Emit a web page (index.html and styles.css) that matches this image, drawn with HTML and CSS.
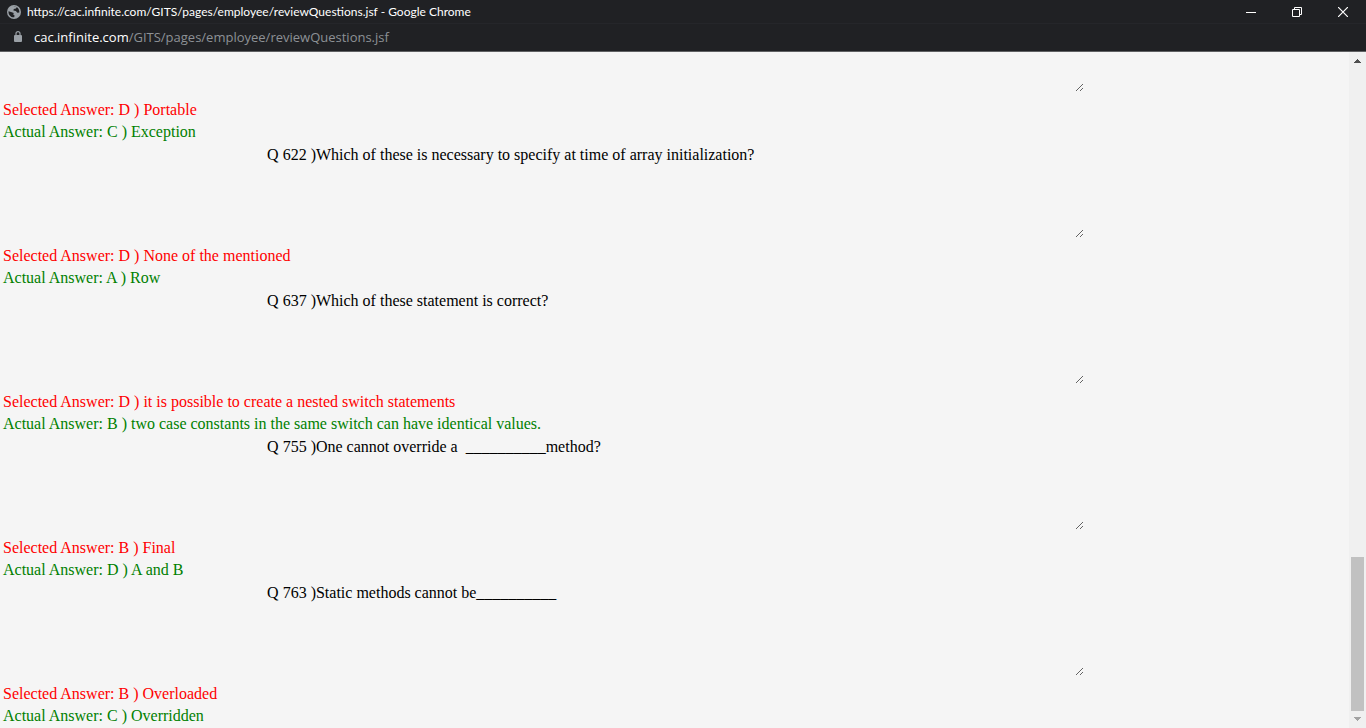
FILE: index.html
```html
<!DOCTYPE html>
<html lang="en">
<head>
<meta charset="utf-8">
<title>Review Questions</title>
<link rel="stylesheet" href="styles.css">
</head>
<body>
<header class="titlebar">
  <svg class="globe" width="14" height="14" viewBox="0 0 14 14" aria-hidden="true"><circle cx="7" cy="7" r="7" fill="#9aa0a6"/><path d="M1.5 6.2 4.8 7.2 6.8 8.1 6.2 9.6 7.6 10.4 7.2 12.3C4 12.7 1.2 9.8 1.5 6.2ZM6.2 1.6 9.8 2.2 8.9 3.6 6.8 4.1 6.4 5.6 8.8 6.1 10.4 7.7 12.3 7.4C12.8 4 10 1 6.2 1.6Z" fill="#202124"/></svg>
  <span class="window-title">https://cac.infinite.com/GITS/pages/employee/reviewQuestions.jsf - Google Chrome</span>
  <div class="window-buttons">
    <button class="window-button" aria-label="Minimize"><svg width="10" height="10" viewBox="0 0 10 10"><path d="M0 5.5H10" stroke="#fff"/></svg></button>
    <button class="window-button" aria-label="Restore"><svg width="10" height="10" viewBox="0 0 10 10" fill="none" stroke="#fff"><path d="M.5 2.5H7.5V9.5H.5ZM2.5 2.5V.5H9.5V7.5H7.5"/></svg></button>
    <button class="window-button" aria-label="Close"><svg width="10" height="10" viewBox="0 0 10 10"><path d="M0 0 10 10M10 0 0 10" stroke="#fff" stroke-width="1.2"/></svg></button>
  </div>
</header>
<div class="addressbar">
  <svg class="lock" width="8" height="11" viewBox="0 0 8 11" aria-hidden="true"><rect y="4" width="8" height="7" rx="1" fill="#9aa0a6"/><path d="M2 4.5V2.6A2 2 0 0 1 6 2.6V4.5" fill="none" stroke="#9aa0a6" stroke-width="1.2"/></svg>
  <span class="url"><span class="host">cac.infinite.com</span>/GITS/pages/employee/reviewQuestions.jsf</span>
</div>
<div class="viewport">
  <main class="review">
    <section class="entry">
      <textarea class="question question-clipped" aria-label="Question" readonly></textarea>
      <p class="selected">Selected Answer: D ) Portable</p>
      <p class="actual">Actual Answer: C ) Exception</p>
    </section>
    <section class="entry">
      <textarea class="question" aria-label="Question 622" readonly>Q 622 )Which of these is necessary to specify at time of array initialization?</textarea>
      <p class="selected">Selected Answer: D ) None of the mentioned</p>
      <p class="actual">Actual Answer: A ) Row</p>
    </section>
    <section class="entry">
      <textarea class="question" aria-label="Question 637" readonly>Q 637 )Which of these statement is correct?</textarea>
      <p class="selected">Selected Answer: D ) it is possible to create a nested switch statements</p>
      <p class="actual">Actual Answer: B ) two case constants in the same switch can have identical values.</p>
    </section>
    <section class="entry">
      <textarea class="question" aria-label="Question 755" readonly>Q 755 )One cannot override a  __________method?</textarea>
      <p class="selected">Selected Answer: B ) Final</p>
      <p class="actual">Actual Answer: D ) A and B</p>
    </section>
    <section class="entry">
      <textarea class="question" aria-label="Question 763" readonly>Q 763 )Static methods cannot be__________</textarea>
      <p class="selected">Selected Answer: B ) Overloaded</p>
      <p class="actual">Actual Answer: C ) Overridden</p>
    </section>
  </main>
  <div class="scrollbar" aria-hidden="true">
    <svg width="7" height="4" viewBox="0 0 7 4" shape-rendering="crispEdges"><path d="M3 0H4V1H5V2H6V3H7V4H0V3H1V2H2V1H3Z" fill="#505050"/></svg>
    <div class="track"><div class="thumb"></div></div>
    <svg width="7" height="4" viewBox="0 0 7 4" shape-rendering="crispEdges"><path d="M0 0H7V1H6V2H5V3H4V4H3V3H2V2H1V1H0Z" fill="#a3a3a3"/></svg>
  </div>
</div>
</body>
</html>
```

FILE: styles.css
```css
* { box-sizing: border-box; }
body {
  display: flex;
  flex-direction: column;
  height: 100vh;
  margin: 0;
  overflow: hidden;
  background: #f5f5f5;
  font-family: "Liberation Serif", "Times New Roman", serif;
  font-size: 16px;
}
.titlebar {
  display: flex;
  flex: none;
  align-items: center;
  height: 24px;
  padding-left: 7px;
  background: #202124;
  border-bottom: 1px solid #25262a;
  color: #fff;
  font: 12px Lato, "Segoe UI", sans-serif;
}
.globe { margin-right: 6px; }
.window-title { flex: 1; white-space: nowrap; }
.window-buttons { display: flex; }
.window-button {
  display: grid;
  place-items: center;
  width: 46px;
  height: 20px;
  padding: 0;
  border: 0;
  background: none;
}
.addressbar {
  display: flex;
  flex: none;
  align-items: center;
  height: 28px;
  padding: 0 14px 2px;
  background: #202124;
  border-bottom: 1px solid #606163;
  color: #8d9196;
  font: 13px "Open Sans", "Segoe UI", sans-serif;
}
.lock { margin-right: 12px; }
.url { white-space: nowrap; }
.host { color: #fff; }
.viewport {
  display: flex;
  flex: 1;
  min-height: 0;
}
.review {
  flex: 1;
  min-width: 0;
  overflow: hidden;
}
.question {
  display: block;
  width: 60.7%;
  height: 94px;
  margin: 1px auto 7px;
  padding: 2px;
  border: 0;
  outline: 0;
  background: transparent;
  color: #000;
  font: inherit;
  line-height: 18px;
  resize: both;
}
.question-clipped {
  height: 39px;
}
.selected, .actual {
  margin: 0;
  padding-left: 3px;
  line-height: 22px;
}
.selected { color: #f00; }
.actual { color: #008000; }
.scrollbar {
  display: flex;
  flex: none;
  flex-direction: column;
  align-items: center;
  width: 17px;
  padding: 7px 0;
  background: #f0f0f0;
}
.track {
  display: flex;
  flex: 1;
  flex-direction: column;
  justify-content: flex-end;
  width: 13px;
  padding: 6px 0;
}
.thumb {
  height: 24%;
  background: #c1c1c1;
}
```
